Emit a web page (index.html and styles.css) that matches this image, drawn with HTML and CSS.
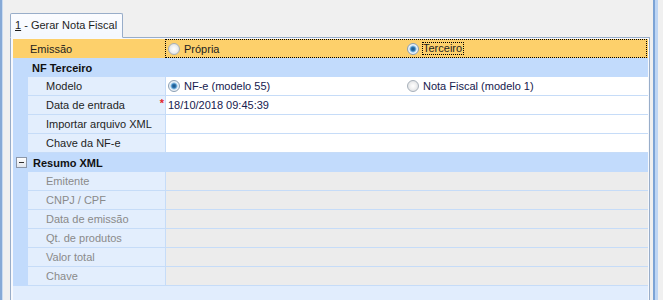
FILE: index.html
```html
<!DOCTYPE html>
<html>
<head>
    <title>Gerar Nota Fiscal</title>
    <link rel="stylesheet" href="styles.css">
</head>
<body>
    <div class="window">
        <div class="edge-left"></div>
        <div class="content">
            <div class="tabs">
                <div class="tab"><u>1</u> - Gerar Nota Fiscal</div>
            </div>
            <div class="panel">
                <div class="grid">
                    <!-- top level row, focused -->
                    <div class="row focused">
                        <div class="label top">Emissão</div>
                        <div class="value focus-box">
                            <div class="option"><span class="radio"></span>Própria</div>
                            <div class="option"><span class="radio checked"></span><span class="focus-text">Terceiro</span></div>
                        </div>
                    </div>

                    <div class="row category">
                        <div class="cat-title">NF Terceiro</div>
                    </div>
                    <div class="row">
                        <div class="indent"></div>
                        <div class="label">Modelo</div>
                        <div class="value">
                            <div class="option"><span class="radio checked"></span>NF-e (modelo 55)</div>
                            <div class="option"><span class="radio"></span>Nota Fiscal (modelo 1)</div>
                        </div>
                    </div>
                    <div class="row">
                        <div class="indent"></div>
                        <div class="label">Data de entrada<span class="required">*</span></div>
                        <div class="value">18/10/2018 09:45:39</div>
                    </div>
                    <div class="row">
                        <div class="indent"></div>
                        <div class="label">Importar arquivo XML</div>
                        <div class="value"></div>
                    </div>
                    <div class="row">
                        <div class="indent"></div>
                        <div class="label">Chave da NF-e</div>
                        <div class="value"></div>
                    </div>

                    <div class="row category">
                        <span class="collapse"></span>
                        <div class="cat-title with-btn">Resumo XML</div>
                    </div>
                    <div class="row readonly">
                        <div class="indent"></div>
                        <div class="label">Emitente</div>
                        <div class="value"></div>
                    </div>
                    <div class="row readonly">
                        <div class="indent"></div>
                        <div class="label">CNPJ / CPF</div>
                        <div class="value"></div>
                    </div>
                    <div class="row readonly">
                        <div class="indent"></div>
                        <div class="label">Data de emissão</div>
                        <div class="value"></div>
                    </div>
                    <div class="row readonly">
                        <div class="indent"></div>
                        <div class="label">Qt. de produtos</div>
                        <div class="value"></div>
                    </div>
                    <div class="row readonly">
                        <div class="indent"></div>
                        <div class="label">Valor total</div>
                        <div class="value"></div>
                    </div>
                    <div class="row readonly">
                        <div class="indent"></div>
                        <div class="label">Chave</div>
                        <div class="value"></div>
                    </div>
                </div>
            </div>
        </div>
        <div class="edge-right"></div>
    </div>
</body>
</html>
```

FILE: styles.css
```css
html, body {
    margin: 0;
    padding: 0;
    height: 300px;
    overflow: hidden;
}
body {
    font-family: "Liberation Sans", Arial, sans-serif;
    font-size: 11px;
    color: #1e1e1e;
    background: #f0f0f0;
}
.window {
    display: flex;
    width: 663px;
    height: 300px;
}
.edge-left {
    width: 2px;
    background: #86a9d6;
    border-right: 1px solid #c9dbf1;
}
.edge-right {
    width: 2px;
    background: #7ca3d5;
    border-right: 3px solid #bdd5f4;
}
.content {
    width: 650px;
    padding: 13px 0 0 7px;
    box-sizing: border-box;
}
.tabs {
    display: flex;
    height: 24px;
}
.tab {
    position: relative;
    z-index: 1;
    height: 23px;
    margin-bottom: -1px;
    padding: 0 5px 0 4px;
    white-space: nowrap;
    line-height: 22px;
    background: linear-gradient(#fbfcff, #f4f8fe);
    border: 1px solid #98adc9;
    border-bottom: 1px solid #f4f8fe;
    border-radius: 2px 2px 0 0;
}
.panel {
    width: 640px;
    height: 270px;
    box-sizing: border-box;
    border: 1px solid #98adc9;
    padding: 1px 1px 0 2px;
    background: #f7f9fd;
}
.grid {
    width: 635px;
    height: 268px;
    background: #e1edfd;
}
.row {
    display: flex;
    height: 19px;
}
.indent {
    width: 15px;
    background: #c2dbfc;
}
.label {
    width: 119px;
    padding-left: 18px;
    display: flex;
    align-items: center;
    background: #e3eefd;
    border-right: 1px solid #c6dcf8;
    border-bottom: 1px solid #c6dcf8;
}
.value {
    flex: 1;
    display: flex;
    align-items: center;
    padding-left: 2px;
    background: #fff;
    border-bottom: 1px solid #c6dcf8;
    color: #16204e;
}
.required {
    margin-left: auto;
    margin-right: 1px;
    margin-top: -4px;
    color: #e2262a;
    font-weight: bold;
}
.option {
    display: flex;
    align-items: center;
    width: 239px;
}
.radio {
    width: 10px;
    height: 10px;
    margin-right: 4px;
    border-radius: 50%;
    border: 1px solid #a7b0ba;
    background: radial-gradient(circle at 50% 50%, #ffffff 0, #f2f2f2 40%, #d4d8dc 100%);
}
.radio.checked {
    border-color: #8b9fb4;
    background: radial-gradient(circle at 50% 50%, #1d4f7e 0, #2f78b4 2px, #8fc0e4 3px, #eef4fa 4px, #d8e0e8 100%);
}

/* focused top row */
.row.focused {
    background: #fdd06b;
}
.row.focused .label {
    width: 135px;
    padding-left: 17px;
    background: none;
    border: none;
}
.row.focused .focus-box {
    background: none;
    border: 1px dotted #000;
    margin-right: 1px;
    color: #1e1e1e;
}
.focus-text {
    outline: 1px dotted #000;
    outline-offset: 0;
    line-height: 11px;
    padding: 0 1px 0 0;
}

/* category rows */
.row.category {
    align-items: center;
    background: #c2dbfc;
}
.cat-title {
    padding-left: 19px;
    font-weight: bold;
    color: #111;
}
.cat-title.with-btn {
    padding-left: 6px;
}
.collapse {
    margin-left: 3px;
    width: 9px;
    height: 9px;
    border: 1px solid #8c97a8;
    background: linear-gradient(#ffffff, #dfe5ee);
    display: flex;
    align-items: center;
    justify-content: center;
}
.collapse::before {
    content: "";
    width: 5px;
    height: 1px;
    background: #303030;
}

/* read-only rows */
.row.readonly .label {
    color: #8a8a8a;
}
.row.readonly .value {
    background: #ececec;
}
```
